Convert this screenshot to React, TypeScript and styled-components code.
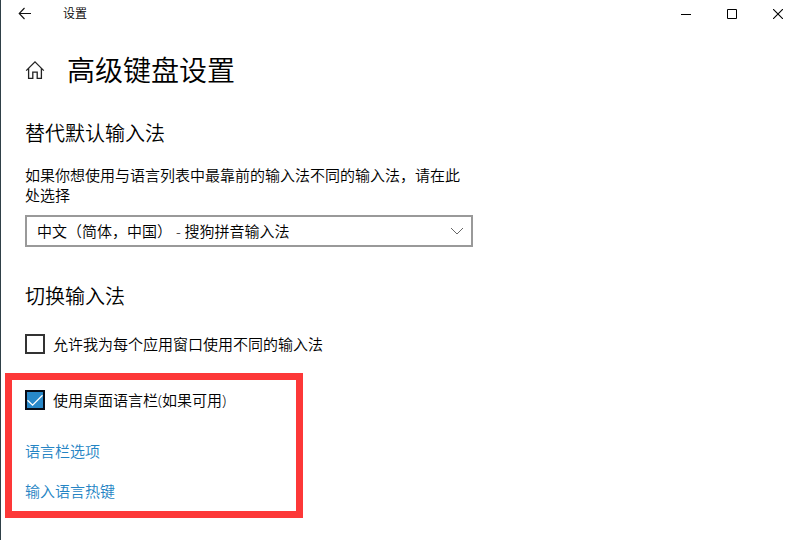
import React, { useState } from "react";
import styled, { createGlobalStyle } from "styled-components";

const GlobalStyle = createGlobalStyle`
  *, *::before, *::after { box-sizing: border-box; }
  body {
    margin: 0;
    background: #fff;
    color: #000;
    font-family: "Open Sans", "Noto Sans CJK SC", sans-serif;
    font-size: 15px;
    font-weight: 350;
    line-height: 20px;
  }
  button, select { font: inherit; color: inherit; }
`;

const Window = styled.div`
  min-height: 100vh;
  border-left: 1px solid #2f4048;
  background: #fff;
`;

const TitleBar = styled.header`
  display: flex;
  align-items: center;
  height: 28px;
  padding: 0 5px 0 9px;
`;

const IconButton = styled.button`
  display: grid;
  place-items: center;
  width: 30px;
  height: 28px;
  padding: 0;
  border: 0;
  background: transparent;
`;

const WindowName = styled.span`
  flex: 1;
  margin-left: 23px;
  font-size: 12px;
  line-height: 22px;
`;

const WindowControls = styled.div`
  display: flex;
  gap: 16px;
`;

const Content = styled.main`
  padding: 22px 24px;
`;

const PageHeader = styled.div`
  display: flex;
  align-items: center;
  gap: 22px;
  height: 40px;
`;

const HomeButton = styled(IconButton)`
  width: 20px;
`;

const PageTitle = styled.h1`
  margin: 0;
  font-size: 28px;
  font-weight: 350;
  line-height: 40px;
`;

const Section = styled.section`
  max-width: 448px;
  margin-top: 30px;

  & + & { margin-top: 36px; }
`;

const SectionTitle = styled.h2<{ $gap: number }>`
  margin: 0 0 ${({ $gap }) => $gap}px;
  font-size: 20px;
  font-weight: 350;
  line-height: 28px;
`;

const FieldLabel = styled.label`
  display: block;
  margin-bottom: 10px;
`;

const SelectBox = styled.div`
  display: grid;
  align-items: center;

  > * { grid-area: 1 / 1; }
  > svg {
    justify-self: end;
    margin-right: 9px;
    pointer-events: none;
  }
`;

const Select = styled.select`
  width: 100%;
  height: 32px;
  padding: 0 32px 0 10px;
  border: 2px solid #999;
  border-radius: 0;
  background: #fff;
  appearance: none;
`;

const CheckRow = styled.label`
  display: flex;
  align-items: center;
  gap: 8px;
`;

const CheckFrame = styled.span`
  display: grid;
  width: 20px;
  height: 20px;

  > * { grid-area: 1 / 1; }
  > svg { pointer-events: none; }
`;

const CheckInput = styled.input`
  width: 20px;
  height: 20px;
  margin: 0;
  border: 2px solid #333;
  background: #fff;
  appearance: none;

  &:checked {
    border-color: #060b16;
    background: #2888c9;
  }
`;

const Highlight = styled.div`
  display: flex;
  flex-direction: column;
  align-items: flex-start;
  width: 298px;
  margin: 19px 0 0 -20px;
  padding: 10px 13px;
  border: 7px solid #fd3838;
`;

const LinkList = styled.nav`
  display: flex;
  flex-direction: column;
  gap: 20px;
  margin-top: 31px;
`;

const Link = styled.a`
  color: #2484c4;
  text-decoration: none;
`;

function CheckOption({ label, initial = false }: { label: string; initial?: boolean }) {
  const [checked, setChecked] = useState(initial);
  return (
    <CheckRow>
      <CheckFrame>
        <CheckInput
          type="checkbox"
          checked={checked}
          onChange={(event) => setChecked(event.target.checked)}
        />
        {checked && (
          <svg width="20" height="20" viewBox="0 0 20 20" fill="none" stroke="#fff" strokeWidth="1.3" aria-hidden="true">
            <path d="M2.5 10.2 7.6 15.2 17.5 5.2" />
          </svg>
        )}
      </CheckFrame>
      {label}
    </CheckRow>
  );
}

export default function App() {
  return (
    <>
      <GlobalStyle />
      <Window>
        <TitleBar>
          <IconButton aria-label="返回">
            <svg width="14" height="14" viewBox="0 0 14 14" fill="none" stroke="#111" strokeWidth="1.1" aria-hidden="true">
              <path d="M1.2 6.5H13M6.5 1 1.2 6.5l5.3 5.5" />
            </svg>
          </IconButton>
          <WindowName>设置</WindowName>
          <WindowControls>
            <IconButton aria-label="最小化">
              <svg width="10" height="10" viewBox="0 0 10 10" stroke="#000" aria-hidden="true">
                <path d="M0 5.5H10" />
              </svg>
            </IconButton>
            <IconButton aria-label="最大化">
              <svg width="10" height="10" viewBox="0 0 10 10" fill="none" stroke="#000" aria-hidden="true">
                <path d="M.5.5h9v9h-9z" />
              </svg>
            </IconButton>
            <IconButton aria-label="关闭">
              <svg width="10" height="10" viewBox="0 0 10 10" stroke="#000" strokeWidth="1.1" aria-hidden="true">
                <path d="M0 0 10 10M10 0 0 10" />
              </svg>
            </IconButton>
          </WindowControls>
        </TitleBar>
        <Content>
          <PageHeader>
            <HomeButton aria-label="主页">
              <svg width="20" height="20" viewBox="0 0 20 20" fill="none" stroke="#222" strokeWidth="1.3" aria-hidden="true">
                <path d="M1.2 10.6 10 1.9l8.8 8.7M3.6 8.6v9.7h4.2v-6.1h4.4v6.1h4.2V8.6" />
              </svg>
            </HomeButton>
            <PageTitle>高级键盘设置</PageTitle>
          </PageHeader>

          <Section>
            <SectionTitle $gap={17}>替代默认输入法</SectionTitle>
            <FieldLabel htmlFor="input-method">
              如果你想使用与语言列表中最靠前的输入法不同的输入法，请在此处选择
            </FieldLabel>
            <SelectBox>
              <Select id="input-method">
                <option>中文（简体，中国） - 搜狗拼音输入法</option>
              </Select>
              <svg width="14" height="8" viewBox="0 0 14 8" fill="none" stroke="#666" aria-hidden="true">
                <path d="M1 1 7 7 13 1" />
              </svg>
            </SelectBox>
          </Section>

          <Section>
            <SectionTitle $gap={23}>切换输入法</SectionTitle>
            <CheckOption label="允许我为每个应用窗口使用不同的输入法" />
            <Highlight>
              <CheckOption label="使用桌面语言栏(如果可用)" initial />
              <LinkList>
                <Link href="#language-bar">语言栏选项</Link>
                <Link href="#hotkeys">输入语言热键</Link>
              </LinkList>
            </Highlight>
          </Section>
        </Content>
      </Window>
    </>
  );
}
